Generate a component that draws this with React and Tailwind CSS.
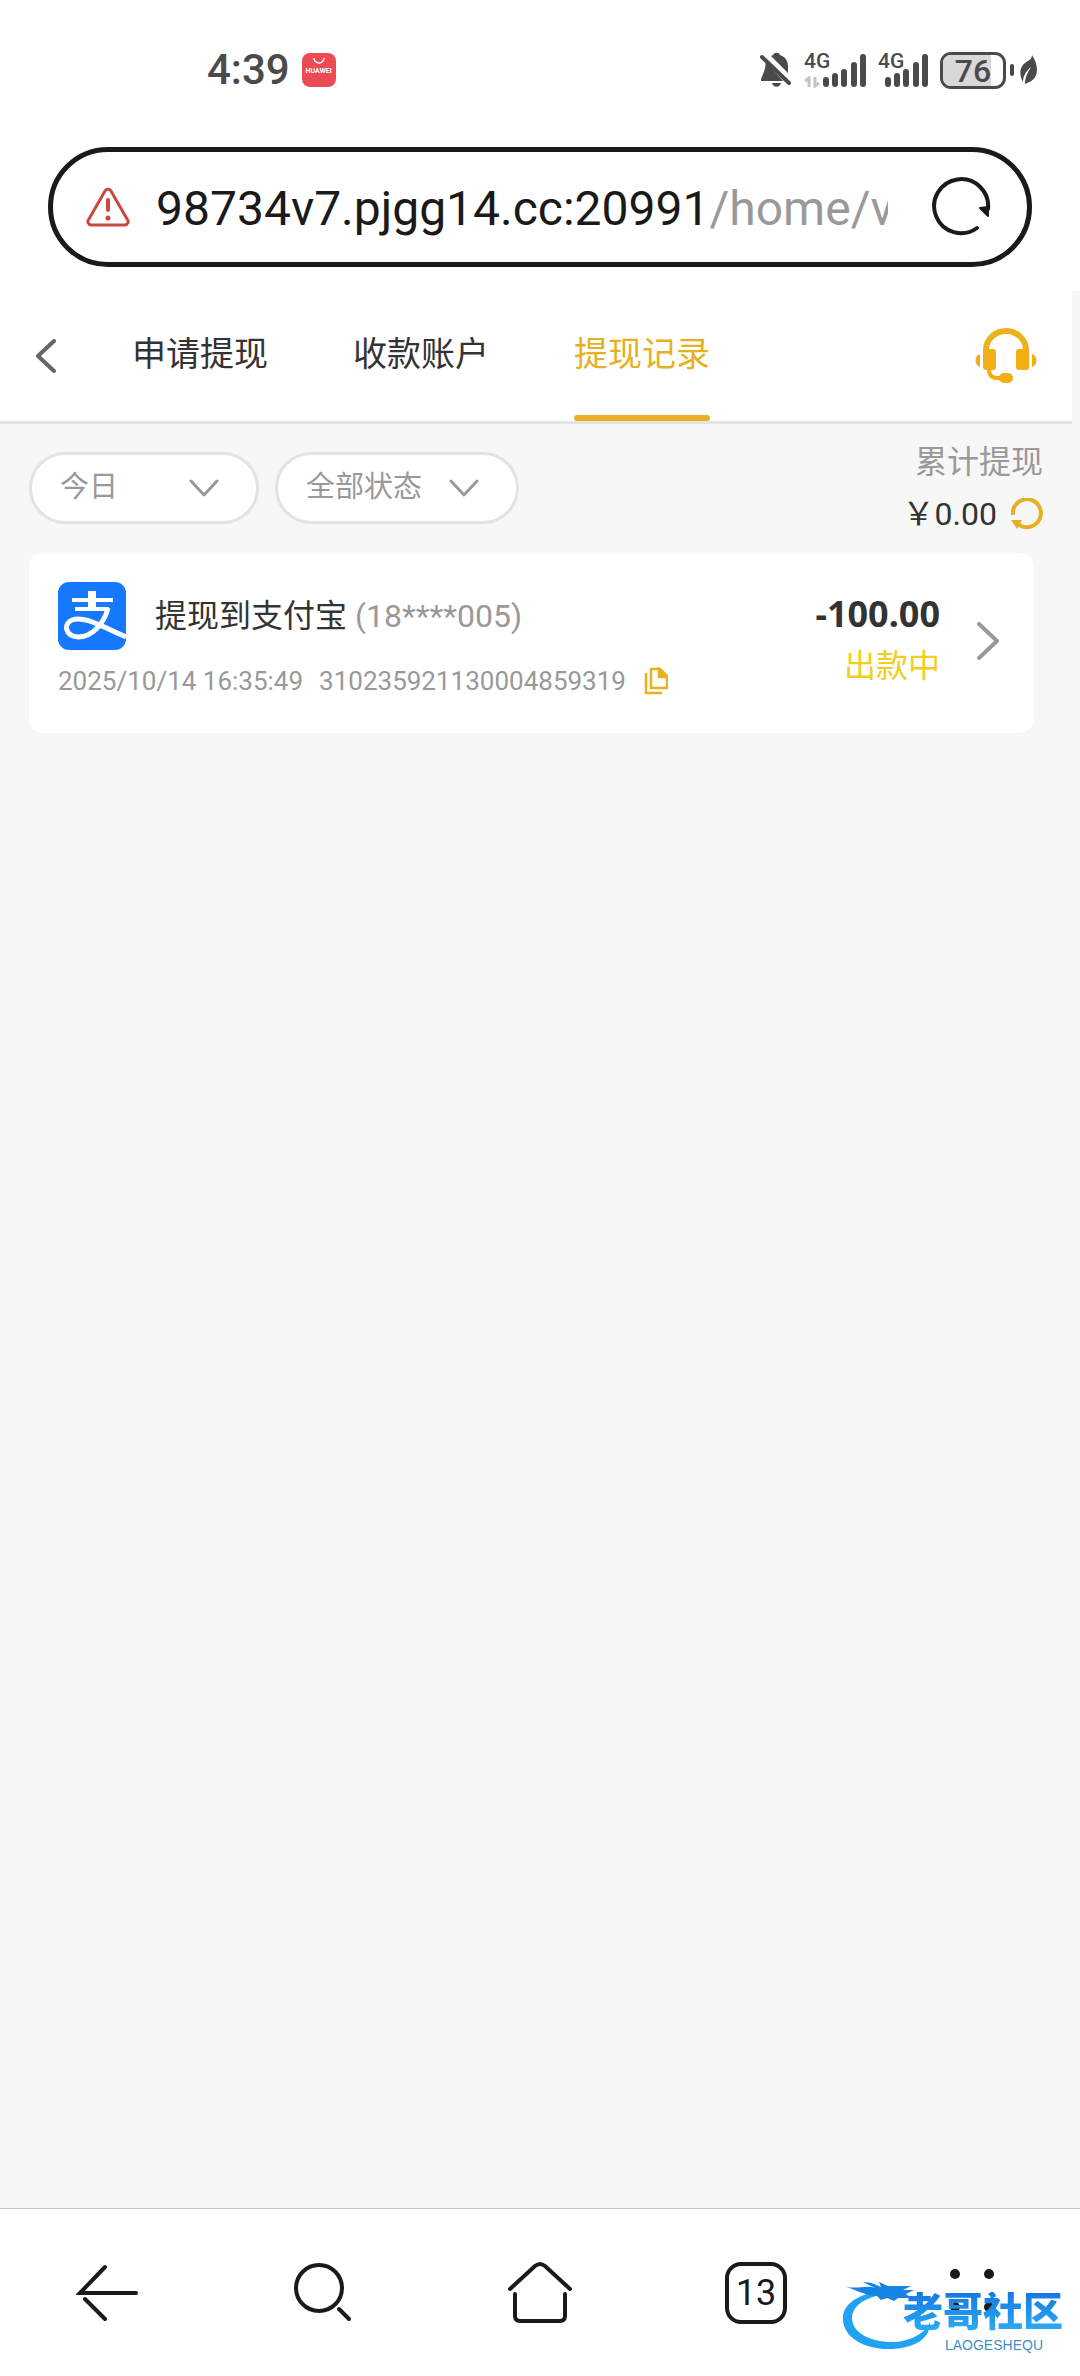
import { useState } from 'react';

const tabs = ['申请提现', '收款账户', '提现记录'];

const records = [
  {
    id: '310235921130004859319',
    title: '提现到支付宝',
    account: '(18****005)',
    time: '2025/10/14 16:35:49',
    amount: '-100.00',
    status: '出款中',
  },
];

const App = () => (
  <div className="min-h-screen flex flex-col bg-white text-[#333] font-['Roboto','Noto_Sans_CJK_SC',sans-serif]">
    <StatusBar />
    <AddressBar />
    <main className="grow flex flex-col bg-[#f7f7f7]">
      <Header />
      <Filters />
      <ul className="ml-[29px] mr-[46px] mt-[13px] space-y-4">
        {records.map((r) => (
          <RecordCard key={r.id} record={r} />
        ))}
      </ul>
    </main>
    <BottomNav />
  </div>
);

const Signal = ({ data }) => (
  <div className={`relative h-9 ${data ? 'w-[62px]' : 'w-[50px]'}`}>
    <span className="absolute left-0 top-0 text-[21px] leading-[18px] font-medium">4G</span>
    {data && (
      <svg className="absolute left-0 bottom-0 w-4 h-3" viewBox="0 0 16 12" fill="none" stroke="#c4c4c4" strokeWidth="3">
        <path d="M1 5l4-3v9M15 7l-4 3V1" />
      </svg>
    )}
    <svg className="absolute right-0 bottom-0 w-[43px] h-9" viewBox="0 0 43 36" fill="none" stroke="currentColor" strokeWidth="6" strokeLinecap="round">
      <path d="M3 28v4M12 24v8M21 20v12M31 13v19M40 5v27" />
    </svg>
  </div>
);

const StatusBar = () => (
  <div className="h-[147px] pt-[50px] pl-[207px] pr-[42px] flex items-start justify-between text-[#4a4a4a]">
    <div className="flex items-center gap-3 h-10">
      <span className="text-[42px] leading-10 font-medium">4:39</span>
      <span className="w-[34px] h-[34px] rounded-lg bg-[#ec4a55] flex flex-col items-center text-white">
        <svg className="w-3 h-[14px]" viewBox="0 0 12 14" fill="none" stroke="currentColor" strokeWidth="1.5">
          <path d="M1 5a5 5 0 0 0 10 0" />
        </svg>
        <span className="text-[7px] leading-[9px] font-bold">HUAWEI</span>
      </span>
    </div>
    <div className="flex items-center h-10">
      <svg className="w-8 h-9" viewBox="0 0 32 36" fill="currentColor">
        <path d="M5 9C7 14 3 22 1 27v2h22L5 9zM11 4l2-1c1-3 6-3 7 0 6 2 8 7 8 11v7L11 4zM12 31h9c-1 5-8 5-9 0z" />
        <path d="M2 5l27 26" stroke="currentColor" strokeWidth="4" strokeLinecap="round" />
      </svg>
      <div className="flex gap-3 ml-3">
        <Signal data />
        <Signal />
      </div>
      <div className="relative ml-3 w-[66px] h-[37px] rounded-[11px] border-3 border-[#4a4a4a] overflow-hidden">
        <div className="h-full w-[80%] bg-[#d8d8d8]" />
        <span className="absolute inset-0 text-center text-[32px] leading-[32px] font-medium">76</span>
      </div>
      <span className="w-1 h-3 ml-1 rounded-full bg-[#4a4a4a]" />
      <svg className="w-[18px] h-8 ml-1.5" viewBox="0 0 18 32" fill="currentColor">
        <path d="M12 1c6 9 9 23-5 28l-2 1c0-7 3-12 6-17-5 4-8 9-8 15C-3 17 2 10 8 7c2-1 4-3 4-6z" />
      </svg>
    </div>
  </div>
);

const AddressBar = () => (
  <div className="px-12 pb-6">
    <div className="h-[120px] rounded-full border-5 border-[#1a1a1a] flex items-center pl-[33px] pr-[36px]">
      <svg className="w-11 h-10 shrink-0" viewBox="0 0 44 40" fill="none" stroke="#c9483f" strokeLinecap="round" strokeLinejoin="round">
        <path d="M19 4a3.500 3.500 0 0 1 6 0l16 28a3.500 3.500 0 0 1-3 6H6a3.500 3.500 0 0 1-3-6z" strokeWidth="3" />
        <path d="M22 13v10" strokeWidth="4" />
        <circle cx="22" cy="31" r="2.500" fill="#c9483f" stroke="none" />
      </svg>
      <button className="grow min-w-0 pt-1 ml-[26px] mr-[43px] text-left text-[48px] leading-[64px] whitespace-nowrap overflow-hidden text-[#1a1a1a]">
        98734v7.pjgg14.cc:20991<span className="text-[#999]">/home/v</span>
      </button>
      <button aria-label="刷新" className="shrink-0">
        <svg className="w-[60px] h-[60px]" viewBox="0 0 60 60" fill="none" stroke="#1a1a1a" strokeWidth="4" strokeLinecap="round">
          <path d="M46 51A27 27 0 1 1 57 32" />
          <path d="M49 31l8-1v9z" fill="#1a1a1a" strokeWidth="2" strokeLinejoin="round" />
        </svg>
      </button>
    </div>
  </div>
);

const Header = () => {
  const [active, setActive] = useState('提现记录');

  return (
    <header className="mr-2 h-[133px] bg-white border-b-3 border-[#e3e3e3] flex items-center pl-9 pr-[35px]">
      <button aria-label="返回">
        <svg className="w-5 h-[35px]" viewBox="0 0 20 35" fill="none" stroke="#666" strokeWidth="4" strokeLinecap="round" strokeLinejoin="round">
          <path d="M18 2L2 17l16 15" />
        </svg>
      </button>
      <nav className="self-stretch flex gap-[85px] ml-[76px]">
        {tabs.map((t) => (
          <button
            key={t}
            onClick={() => setActive(t)}
            className={`relative pb-1 text-[34px] ${active === t ? 'text-[#e6b022]' : 'text-[#333]'}`}
          >
            {t}
            {active === t && <span className="absolute inset-x-0 bottom-0 h-1.5 rounded-full bg-[#e6b022]" />}
          </button>
        ))}
      </nav>
      <button aria-label="客服" className="ml-auto">
        <svg className="w-[62px] h-[56px]" viewBox="0 0 62 56" fill="#f2ae14">
          <path d="M11 24V22a20 19 0 0 1 40 0v2" fill="none" stroke="#eab120" strokeWidth="6" />
          <rect x="8" y="21" width="13" height="21" rx="3" />
          <rect x="41" y="21" width="13" height="21" rx="3" />
          <path d="M5 26v13C-1 37-1 28 5 26zM57 26v13c6-2 6-11 0-13z" />
          <path d="M14 41c0 6 3 9 8 9h6" fill="none" stroke="#f2ae14" strokeWidth="4" />
          <rect x="24" y="45" width="14" height="10" rx="5" />
        </svg>
      </button>
    </header>
  );
};

const FilterSelect = ({ label, options, width }) => (
  <div className={`${width} h-[72px] rounded-full border-3 border-[#e3e3e3] bg-white flex items-center pl-[28px] pr-[37px]`}>
    <select aria-label={label} className="grow min-w-0 appearance-none bg-transparent outline-none text-[29px] text-[#999]">
      {options.map((o) => (
        <option key={o}>{o}</option>
      ))}
    </select>
    <svg className="w-[30px] h-5 shrink-0 pointer-events-none" viewBox="0 0 30 20" fill="none" stroke="#999" strokeWidth="3" strokeLinecap="round" strokeLinejoin="round">
      <path d="M2 3l13 14L28 3" />
    </svg>
  </div>
);

const Filters = () => (
  <section className="flex items-start justify-between pl-[29px] pr-[37px] pt-3">
    <div className="flex gap-4 pt-4">
      <FilterSelect label="日期" width="w-[230px]" options={['今日', '昨日', '近7日']} />
      <FilterSelect label="状态" width="w-[244px]" options={['全部状态', '出款中', '已完成']} />
    </div>
    <div className="text-right text-[32px]">
      <p className="leading-[52px] text-[#999]">累计提现</p>
      <p className="flex items-center justify-end leading-[52px]">
        ￥0.00
        <button aria-label="刷新余额" className="ml-[14px]">
          <svg className="w-8 h-8" viewBox="0 0 32 32" fill="none" stroke="#e6b022" strokeWidth="4">
            <path d="M2 17A14 14 0 1 1 7 26" />
            <path d="M0 22h11l-5 9z" fill="#e6b022" stroke="none" />
          </svg>
        </button>
      </p>
    </div>
  </section>
);

const AlipayIcon = () => (
  <svg className="w-[68px] h-[68px]" viewBox="0 0 68 68">
    <rect width="68" height="68" rx="11" fill="#1677ff" />
    <g fill="none" stroke="#fff">
      <path d="M34 9v19" strokeWidth="8" />
      <path d="M14 18h41M17 27h34" strokeWidth="4" />
      <path d="M50 26C46 42 34 55 20 55 7 54 5 42 14 38c12-4 25 4 54 17" strokeWidth="5" />
    </g>
  </svg>
);

const RecordCard = ({ record }) => (
  <li className="h-[180px] rounded-[14px] bg-white flex pl-[29px] pr-[34px]">
    <div className="pt-[29px]">
      <div className="flex items-center">
        <AlipayIcon />
        <h2 className="ml-[29px] text-[32px] leading-[40px]">{record.title}</h2>
        <span className="ml-2 text-[32px] leading-[40px] text-[#999]">{record.account}</span>
      </div>
      <div className="flex items-center mt-[13px] text-[26px] leading-[36px] text-[#999]">
        <time>{record.time}</time>
        <span className="ml-4">{record.id}</span>
        <button aria-label="复制" className="ml-[18px]">
          <svg className="w-6 h-7" viewBox="0 0 24 28" fill="none" stroke="#e9b021" strokeWidth="2.500">
            <path d="M7 2h9l7 7v12H7zM2 6v20h16" />
            <path d="M15 2v8h8z" fill="#e9b021" />
          </svg>
        </button>
      </div>
    </div>
    <div className="ml-auto pt-[39px] text-right">
      <p className="font-['Noto_Sans'] font-bold text-[36px] leading-[44px]">{record.amount}</p>
      <p className="mt-1.5 text-[32px] leading-[48px] text-[#f0cf22]">{record.status}</p>
    </div>
    <button aria-label="详情" className="self-start mt-[69px] ml-9">
      <svg className="w-6 h-[38px]" viewBox="0 0 24 38" fill="none" stroke="#999" strokeWidth="4" strokeLinecap="round" strokeLinejoin="round">
        <path d="M3 2l18 17L3 36" />
      </svg>
    </button>
  </li>
);

const Watermark = () => (
  <div className="absolute right-[17px] bottom-6 w-[222px] h-[72px] pointer-events-none">
    <svg className="absolute left-0 top-0 w-[94px] h-[72px]" viewBox="0 0 94 72" fill="none">
      <path d="M32 12C10 18 1 28 2 40c1 18 22 30 49 29 23-1 39-11 38-27-5 12-21 20-38 20-23 0-40-10-40-24 0-10 9-18 24-22z" fill="#22a2f2" />
      <path d="M1 5c12 6 24-1 33 3L22 2c9 0 13 3 18 5l-2-5 9 4h8l15 0-8 4 11 0-8 4 5 4H57l-4 3-7-3-6 2-4-4c-10 0-22-6-35-11z" fill="#1684e2" />
    </svg>
    <div className="relative flex flex-col items-end">
      <p className="mt-3 text-[40px] leading-[42px] font-black whitespace-nowrap bg-gradient-to-b from-[#1678e0] to-[#2eb0f5] bg-clip-text text-transparent">
        老哥社区
      </p>
      <p className="mt-1 mr-5 font-['Liberation_Sans'] text-[14px] leading-[14px] text-[#3f8fc4]">LAOGESHEQU</p>
    </div>
  </div>
);

const BottomNav = () => (
  <footer className="relative h-[168px] border-t border-[#c8c8c8] bg-white">
    <nav className="h-full grid grid-cols-5 place-items-center text-[#1a1a1a]">
      <button aria-label="后退">
        <svg className="w-16 h-16" viewBox="0 0 64 64" fill="none" stroke="currentColor" strokeWidth="4" strokeLinecap="round">
          <path d="M29 6L4 32h56M9 38l20 20" />
        </svg>
      </button>
      <button aria-label="搜索">
        <svg className="w-16 h-16" viewBox="0 0 64 64" fill="none" stroke="currentColor" strokeWidth="4" strokeLinecap="round">
          <circle cx="27" cy="27" r="23" />
          <path d="M47 48l10 10" />
        </svg>
      </button>
      <button aria-label="主页">
        <svg className="w-16 h-16" viewBox="0 0 64 64" fill="none" stroke="currentColor" strokeWidth="4" strokeLinecap="round">
          <path d="M2 28L27 5q5-4 10 0l25 23M7 33v22q0 5 5 5h40q5 0 5-5V33" />
        </svg>
      </button>
      <button className="w-[62px] h-[62px] rounded-2xl border-4 border-current text-[36px] leading-[52px]">13</button>
      <button aria-label="菜单">
        <svg className="w-16 h-16" viewBox="0 0 64 64" fill="currentColor">
          <circle cx="15" cy="13" r="5" />
          <circle cx="49" cy="13" r="5" />
          <circle cx="15" cy="46" r="5" />
          <circle cx="49" cy="46" r="5" />
        </svg>
      </button>
    </nav>
    <Watermark />
  </footer>
);

export default App;
